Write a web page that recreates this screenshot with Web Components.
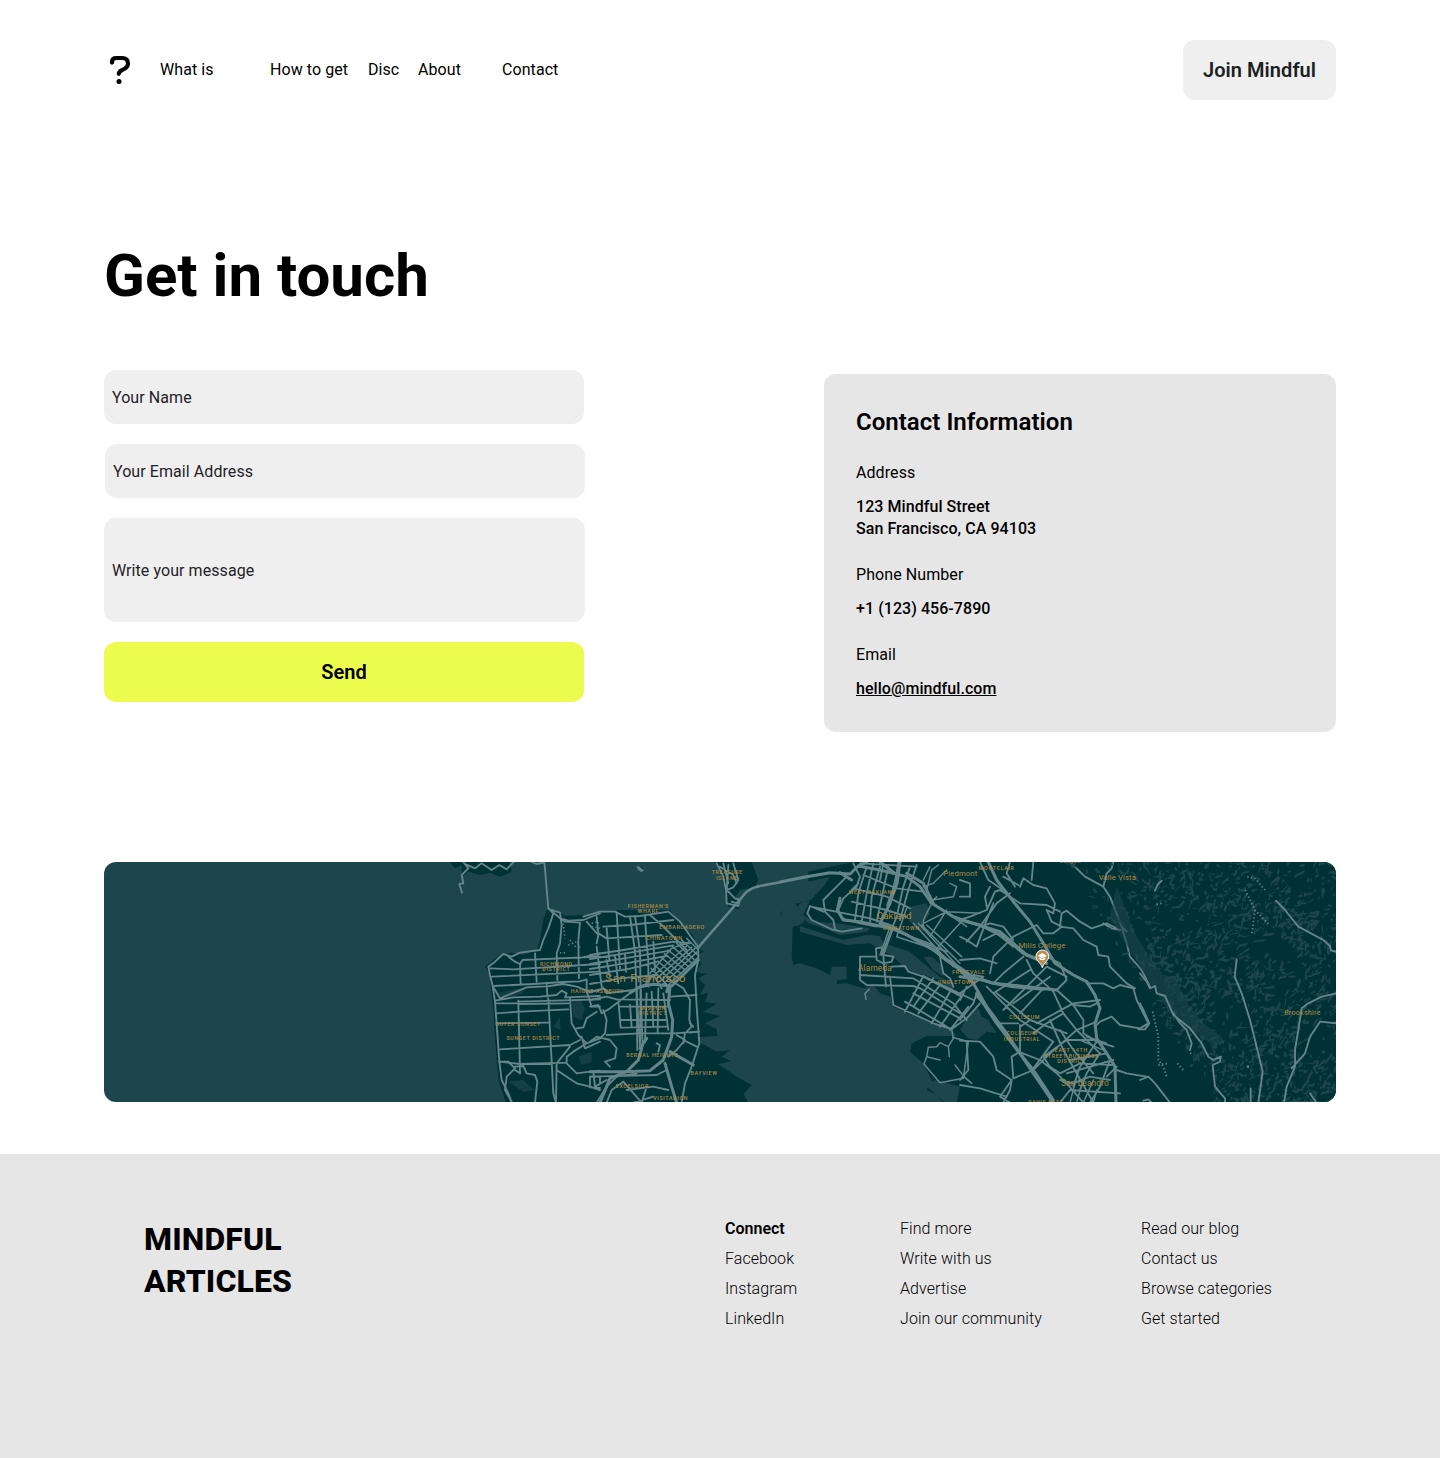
<!DOCTYPE html>
<html lang="en">
<head>
<meta charset="utf-8">
<title>Mindful – Contact</title>
<style>
html,body{margin:0;background:#fff}
body{font-family:Roboto,"Liberation Sans",sans-serif;font-size:16px;line-height:20px;color:#000}
</style>
</head>
<body>
<contact-page></contact-page>

<template id="map-tpl">
<style>
:host{display:block;height:240px;border-radius:12px;overflow:hidden;background:#1c464b}
svg{display:block;width:100%;height:100%}
.land{fill:#003135}
.water{fill:#1c464b}
.r{fill:none;stroke:#64858a;stroke-width:5.6;stroke-linejoin:round;stroke-linecap:round}
.w{stroke-width:9}
.x{stroke-width:12}
.n{stroke-width:4.5}
.dash{stroke-dasharray:4 7;stroke-linecap:butt}
text{font-family:Roboto,sans-serif;fill:#ad8946;font-weight:500;text-anchor:middle;font-size:16px;letter-spacing:1.9px}
.t{font-size:25px;font-weight:400;letter-spacing:.4px}
</style>
<svg viewBox="104 862 1232 240" preserveAspectRatio="none">
<!-- San Francisco peninsula, three units per pixel -->
<g transform="translate(440 860) scale(.33333)">
  <path class="land" d="M320 150L310 180 300 240 290 270 250 285 215 278 185 285 160 300 136 320 150 345 152 380 160 450 164 520 172 620 178 670 200 735H930L910 702 935 675 890 650 835 612 873 603 845 590 870 570 832 575 780 548 770 532 833 528 830 508 795 490 840 468 788 455 830 432 795 425 805 398 780 405 795 375 775 355 800 342 768 335 785 312 775 285 790 273 768 262 760 225 735 205 705 170 690 150 540 150 480 160 430 165 375 168 350 150Z"/>
  <path class="land" d="M30 6L45 25 65 15 65 50 85 35 120 45 150 38 180 50 215 35 210 6ZM825 6L850 60 855 100 865 140 895 148 903 120 885 112 900 90 945 82 955 60 935 6ZM588 18L610 38 608 23Z"/>
  <path class="r" style="fill:#64858a;stroke-width:1" d="M590 18L598 20 612 32 604 36 594 28Z"/>
  <g class="water" opacity=".7"><path d="M395 420L420 415 435 445 425 480 400 470ZM415 590L455 575 455 605 425 615ZM202 665L250 660 282 690 250 695ZM170 400L215 390 260 382 245 402 195 412ZM340 500L360 470 362 510ZM780 290L798 330 785 340Z"/></g>
  <path class="r" d="M313 6L325 145 360 175 385 182 430 180 480 160M70 6L85 25 65 45 70 70 58 72 66 98M80 14L105 25 125 10 155 30 178 15 200 28 220 6M275 6L290 12 312 8M325 145L340 160 325 205 310 240 300 270 240 278 215 290 190 282 165 305 145 320 150 345 158 378 165 425 172 520 178 605 185 660 205 700 215 728"/>
  <path class="r" d="M335 150L360 158 365 195 360 250 350 280 352 360M360 175L375 185 420 188 415 240 417 355M440 185L475 225 470 250M285 280L290 365M240 310L242 370M205 290L225 305 240 312 248 300 480 290M150 325L220 328 480 312M155 350L480 335M158 378L280 372 370 366 420 364 440 358 440 395 480 390M160 382L180 415 260 382 330 378 370 372 410 380 440 392M165 422L220 412 300 410 350 405 365 392 380 400 375 412 480 408M415 295L480 280M320 368L322 410"/>
  <path class="r" d="M235 425L480 418M165 430L235 430M235 432L385 430M168 460L240 455 385 448M170 490L325 488M180 568L390 555 420 540M178 605L240 612 380 608M235 422L240 640M325 415L340 700 348 728M390 415L395 490 415 525 440 550 480 535M440 395L455 440 480 440M440 550L400 575 380 590 380 610 410 640 450 635 480 632M390 560L350 610 348 728M425 530L435 565 480 545M350 630L380 650 410 670 450 680 480 690M450 650H480V670M450 650V682L480 684M410 505L430 502 440 475 470 455"/>
  <path class="r" d="M178 605L205 605 225 625 200 650 195 690 215 725M225 620L250 618 260 640 285 645 292 665 285 728M240 640L225 630"/>
  <path class="r n dash" d="M370 190L375 235M385 255L410 245 420 262M390 240L408 262M455 190L475 185 470 210M360 278L380 278M455 200L480 205"/>
  <g transform="translate(450 0)">
    <path class="r" d="M-20 170L30 155 75 155 105 170 150 168 235 155 270 185 325 262 325 300 315 345 320 440 328 550 305 620 285 670 275 728"/>
    <path class="r" d="M20 170L25 220 50 235 215 225M40 200L120 195 250 180M50 205L58 300M80 160L90 325M120 170L135 275 140 400 150 560M135 168L150 275 152 400 158 560M0 285L100 270 250 245 300 250M0 297L120 278 250 256M0 312L120 292 240 272M0 327L120 308 230 288M0 345L120 326 200 306M0 372L90 355 200 345M180 165L215 195 290 270M165 170L170 250 175 300 175 380M190 245L195 330M20 260L35 380 60 400M50 300L60 350M75 290L85 370M105 280L108 335"/>
    <path class="r n" d="M180 340L245 265 300 245M190 348L290 258M200 356L305 262M210 364L315 265M220 372L322 275M230 380L325 292M183 325L235 378M193 314L248 366M203 303L260 352M213 292L272 340M223 281L283 328M234 270L294 318M247 260L304 308M260 250L312 298M275 240L322 284M290 235L325 270"/>
    <path class="r w" d="M120 398L150 380 190 373 245 378 325 300M235 380L230 395"/><path class="r" style="stroke-width:7.5" d="M325 262L440 130 470 95Q490 81 510 78L570 67"/>
    <path class="r" d="M380 10L400 50 408 90 410 130 445 138 450 120 435 115 410 90 430 82 445 60 430 10M390 20L430 45 440 70M400 10L415 70M415 15L410 90M425 125L440 130"/>
    <path class="r" d="M0 398L40 385 50 400 130 390M0 420L50 410 80 418 240 420M0 440L25 435 35 460 60 445 120 400 160 375M85 420L92 503 230 500M120 435L125 503M140 390L142 570M152 390L150 550M170 400L165 540M185 395L190 500M205 385L203 520M220 400L235 510M95 480L230 480M92 440L235 440M50 525L150 520 250 520 325 515M240 360L280 385 300 420 298 480 305 500 285 520 280 550M240 410L320 405M160 380L190 345 215 385"/>
    <path class="r w" d="M240 380L235 430 248 480 245 530 220 600 180 632 110 635 0 635M225 610L245 680 260 728M155 565L145 600 110 635 60 655 30 728M240 575L310 615M150 565L170 535"/>
    <path class="r" d="M0 545L20 530 60 540 80 565 75 595 45 605 60 620M40 450L50 480 45 520 30 535M0 650L200 645 230 630M10 635L15 680 50 660M20 728L50 680 80 650 140 640M50 728L65 690 100 665M100 665L155 728M110 690L190 680 235 690M130 728L190 710M280 540L320 560M200 550L210 555 205 575M260 525L285 540 260 570 235 590M170 680L155 728M300 490L310 500M328 515L300 518"/>
  </g>
</g>
<!-- East Bay -->
<g transform="translate(780 860) scale(.33333)">
  <path class="land" d="M85 35L150 20 225 6H1680V735H495L470 705 440 690 455 660 430 610 390 575 395 550 440 528 530 528 515 510 465 495 340 440 330 410 300 400 280 375 250 385 200 370 170 372 172 360 200 358 200 320 155 320 150 345 110 325 60 310 40 315 35 290 38 200 60 195 75 180 85 190 120 200 180 225 260 215 270 205 170 190 100 185 70 165 90 120 60 130 40 165 0 170 0 160 50 130 90 122 130 80 150 50 85 65Z"/>
  <path class="water" d="M60 198L190 240 260 225 300 228 310 250 390 275 430 310 480 350 520 370 520 400 480 360 430 345 380 330 340 290 270 250 200 255 60 215ZM390 140L440 130 450 160 430 190 440 210 420 215 385 180ZM430 290L455 290 490 320 490 350 460 330ZM0 165L40 120 70 170 72 190 25 190ZM540 508L575 455 595 445 605 470 625 480 650 520 620 515 590 540 565 535ZM430 670L470 660 540 680 530 728H495Z"/>
  <path class="r" d="M0 66L80 50 150 38 210 42 235 18 260 6" style="stroke-width:9"/>
  <path class="r w" d="M180 38L215 60M235 18L300 30 380 50 420 80 455 130 520 170 580 190 660 215 700 250 740 285 800 310M360 6L345 70 330 130 300 190 380 225 460 270 540 330 580 370 620 440 680 520 720 580 760 640 820 728"/>
  <path class="r x" d="M358 6L350 70 325 135"/><path class="r x" d="M470 275L500 300 540 325 575 350"/><path class="r w" d="M575 350L640 370 700 380 790 388"/>
  <path class="r" d="M220 10L240 50 230 80 190 115 175 150 185 175 240 190 290 200M235 70L215 90M130 120L200 50M130 120L135 155 160 180 165 210 185 215 245 205M130 155L90 138 82 160 95 180 160 210M92 140L270 175 330 195 420 245 500 275M260 20L235 100 225 180M280 10L260 100 245 185M300 20L275 110 270 185M325 20L310 90 290 185M300 10L330 30M220 85L320 110 390 145M215 125L320 150 380 170M250 45L350 85 430 95M390 20L370 80 350 170 330 220 305 285M410 15L385 90 360 180M310 10L300 60M240 10L410 20"/>
  <path class="r w" d="M180 115L172 150 190 180 240 185 330 205M380 40L430 70 460 130M300 6L345 40"/>
  <path class="r n" d="M340 205L310 285M330 200L300 285M400 190L520 320M415 190L530 315M425 195L540 310M440 195L545 290M350 230L470 270M355 215L460 255M380 145L350 230M455 130L430 180 430 200M430 190L500 155 600 160M460 130L560 200M500 150L450 230M540 190L475 260M455 120L520 110 530 80 510 70M430 60L450 20M430 80L460 70 500 30M440 90L455 30 475 15M470 110L450 130"/>
  <path class="r" d="M288 265L305 262 310 285 340 290 335 305 310 310 290 300ZM290 290L240 290 240 360 260 375 400 378 420 385 540 460M310 290L318 380M240 345L400 355 520 430 560 480M335 320L375 318 385 335 430 350 545 410M330 350L340 435 465 492 515 507 560 475 600 430M430 348L375 455M460 355L400 440M480 375L415 460M510 395L455 490M540 415L480 500M565 440L510 510M430 348L580 420M400 400L540 475M375 425L500 500M480 290L490 340 510 355 520 380"/>
  <path class="r n" d="M268 388L255 400 258 418M515 507L520 535 505 560 508 590M505 560L480 548 470 560 445 562 440 590 480 600M440 590L432 612 480 668 550 655 565 545 518 532M525 615L552 650 575 670"/>
  <g transform="translate(540 0)">
    <path class="r w" d="M85 6L110 60 160 125 210 185 250 250 285 310 340 345 380 365 405 405 420 445 405 490 410 535 440 580 465 620 468 728"/>
    <path class="r w" d="M0 180L60 195 130 230 190 280 240 300M50 400L110 490 175 575 220 630 280 720M0 350L70 360 100 370 200 380 290 390"/>
    <path class="r" d="M0 180L30 170 80 150 105 95 120 90 180 130 260 135 300 155M90 80L75 110 80 140M0 110L30 110 30 70 0 60M60 6L85 60 130 90M60 200L20 245 60 200 110 130 150 100M20 240L50 260 80 180 100 130M180 80L190 55 220 75 260 85 285 130 280 160 260 150M220 6L215 60M130 50L175 75M150 6L140 40 165 80M260 150L275 185 305 200 280 220 250 220 230 195 160 230 100 290 90 340M300 200L305 160 320 152 360 185 395 205 440 190 480 210M300 200L340 205 370 240 410 260 415 285 445 290 450 320 500 370 525 385"/>
    <path class="r" d="M330 6L375 50 430 80 450 110 485 200 500 215M430 80L440 40 455 25 460 6M485 200L500 250 510 290 545 330 570 380M480 210L455 205 430 190M380 370L430 370 460 385 480 375 520 385 530 420 550 460 565 490 540 505 480 495 455 470 420 485 405 500M260 320L320 350M240 300L260 290 300 310 320 360 290 390 340 435 390 440 410 430M200 300L220 340 280 395 310 460 350 510 420 580M70 240L110 220 160 260M60 200L90 190 130 200 160 240M0 300L60 295 110 310M20 240L0 230M100 370L130 340 190 290M130 450L230 350 260 320M180 460L250 385M230 490L340 430 420 420M100 400L210 330M160 430L270 350M80 380L180 480 280 545M110 400L210 480 320 520M50 400L40 430 0 480M20 380L0 420M0 400L70 350 40 345"/>
    <path class="r" d="M110 490L80 440 50 410M180 495L180 575 155 590 160 655 220 630 260 590 350 510 410 485M175 575L240 600 290 640 320 670 370 728M175 490L120 490M280 545L220 625M210 480L180 500M310 460L260 490 220 520M340 435L370 480 370 520 410 545 460 560M250 590L320 540 410 540M270 480L310 570 350 640 400 728M300 510L340 570 400 640M0 542L60 545 100 590 110 630 155 660 120 710 150 728M20 545L25 630 0 660M0 675L60 685 140 710M155 660L150 690 130 728M250 590L270 620 300 640 360 610 460 615M300 660L340 670 390 650 450 660M340 680L360 620 410 545M360 690L380 640 420 580M390 728L420 680 450 600M300 728L330 690 480 700M470 620L440 650M470 630L500 640 560 650M330 600L440 580M320 640L460 600"/>
    <path class="r n" d="M350 650L330 728M370 655L350 728M400 660L370 728M410 690L400 728M380 530L440 550M360 540L440 575"/>
  </g>
  <g transform="translate(1080 0)">
    <g id="hills" fill="#1c464b"></g>
    <path class="water" opacity=".6" d="M-70 80L-50 130-20 210 20 280 70 345 110 350 120 390 150 440 190 490 245 530 230 560 180 530 120 490 80 440 50 400 0 320-50 240-90 170Z"/>
    <path class="r" d="M45 92L52 75 65 62M408 122L435 150 475 200 550 240 570 258 573 272 590 275M290 298L284 350 305 400 330 480 350 560 368 635 362 680 355 728M590 400L545 410 505 430 485 445 475 510 465 570 465 620 440 680 432 728M590 490L540 485 510 530 495 580 455 625M0 340L20 365 30 385 45 378 50 400 75 408 100 465 150 505 185 550 205 590 220 600 242 590 240 605 218 615 225 680 255 715 255 728M100 460L120 490 140 510 155 550 150 570M0 430L10 450 28 490 15 508-5 508M0 660L25 650 45 670 90 728M10 722L25 718 35 728M332 685V728M510 700L520 715 530 728H440"/>
    <path class="r dash" d="M322 50L345 55 375 90M315 90L345 150 388 195M345 150L335 225M38 455L55 530 55 600 70 620 80 650M55 615L85 610M112 610L130 630M150 580H160M50 133L65 130"/>
    <circle cx="324" cy="620" r="4" fill="#5f8084"/>
  </g>
</g>
<g transform="translate(440 860) scale(.33333)">
  <text x="349" y="317">RICHMOND</text><text x="349" y="333">DISTRICT</text><text x="472" y="399">HAIGHT-ASHBURY</text><text x="234" y="498">OUTER SUNSET</text><text x="280" y="540">SUNSET DISTRICT</text>
  <text x="625" y="143">FISHERMAN'S</text><text x="625" y="158">WHARF</text><text x="726" y="207">EMBARCADERO</text><text x="673" y="239">CHINATOWN</text><text x="862" y="43">TREASURE</text><text x="862" y="60">ISLAND</text>
  <text x="617" y="365" style="font-size:34px;font-weight:400;letter-spacing:2.3px">San Francisco</text><text x="639" y="449">MISSION</text><text x="639" y="466">DISTRICT</text><text x="637" y="590">BERNAL HEIGHTS</text><text x="792" y="644">BAYVIEW</text><text x="577" y="684">EXCELSIOR</text><text x="692" y="719">VISITACION</text>
</g>
<g transform="translate(780 860) scale(.33333)">
  <text x="277" y="103">WEST OAKLAND</text><text x="343" y="178" class="t" style="font-size:28px">Oakland</text><text x="364" y="209">CHINATOWN</text><text x="285" y="333" class="t">Alameda</text><text x="566" y="343">FRUITVALE</text><text x="528" y="371">JINGLETOWN</text><text x="541" y="48" class="t" style="font-size:23px">Piedmont</text><text x="650" y="29">MONTCLAIR</text><text x="871" y="9">Canyon</text><text x="1012" y="59" class="t" style="font-size:23px">Valle Vista</text><text x="786" y="264" class="t" style="font-size:24px">Mills College</text><text x="734" y="477">COLISEUM</text><text x="726" y="525">COLISEUM</text><text x="726" y="542">INDUSTRIAL</text><text x="874" y="577">EAST 14TH</text><text x="874" y="593">STREET BUSINESS</text><text x="874" y="610">DISTRICT</text><text x="915" y="678" class="t">San Leandro</text><text x="798" y="731">DAVIS EAST</text><text x="1567" y="464" class="t" style="font-size:22px">Brookshire</text>
  <path d="M787 323C782 307 768 303 768 289A19 19 0 0 1 806 289C806 303 792 307 787 323Z" fill="#b98d50" stroke="#fff" stroke-width="3"/>
  <path d="M773 287L787 279 801 287 787 295ZM778 292L787 297 796 292V298Q787 304 778 298Z" fill="#fff"/>
</g>
</svg>
</template>

<script>
const define=(name,html)=>customElements.define(name,class extends HTMLElement{
  constructor(){super();this.attachShadow({mode:'open'}).innerHTML=html}
});

define('brand-mark',`<style>:host{display:block;width:30px;height:30px}svg{display:block}</style>
<svg width="30" height="30" viewBox="0 0 30 30" fill="none"><path d="M8 7.6V6.8Q8 3 12.5 3H18Q24 3 24 8.5Q24 11.5 21 13.5L17.5 15.3Q14.8 16.8 14.8 18.8" stroke="#000" stroke-width="4.2" stroke-linecap="round" stroke-linejoin="round"/><circle cx="15" cy="26.5" r="2.5" fill="#000"/></svg>`);

define('site-header',`<style>
:host{display:flex;align-items:center;justify-content:space-between;height:60px}
.left{display:flex;align-items:center;gap:26px}
nav{display:grid;grid-template-columns:110px 98px 50px 84px auto;font-weight:420;letter-spacing:.07px}
a{color:#000;text-decoration:none;white-space:nowrap}
button{height:60px;width:153px;padding:0;border:0;border-radius:12px;background:#efefef;color:#1b1f23;font:570 20px/24px Roboto,sans-serif;letter-spacing:.05px;white-space:nowrap}
</style><div class="left"><brand-mark></brand-mark><nav><a>What is</a><a>How to get</a><a>Disc</a><a>About</a><a>Contact</a></nav></div><button>Join Mindful</button>`);

define('form-field',`<style>
:host{display:flex;align-items:center;box-sizing:border-box;width:480px;height:54px;padding:2px 8px 0;border-radius:12px;background:#efefef;color:#1f2327;font-weight:420;letter-spacing:.07px}
:host([shifted]){margin-left:1px}
:host([multiline]){width:481px;height:104px}
</style><slot></slot>`);

define('contact-form',`<style>
:host{display:flex;flex-direction:column;gap:20px;width:481px}
button{width:480px;height:60px;border:0;border-radius:12px;background:#ecfc4e;color:#000;font:600 20px/24px Roboto,sans-serif;padding:0}
</style><form-field>Your Name</form-field><form-field shifted>Your Email Address</form-field><form-field multiline>Write your message</form-field><button>Send</button>`);

define('info-item',`<style>
:host{display:flex;flex-direction:column;gap:12px;line-height:22px;font-weight:400;letter-spacing:.08px}
.v{font-weight:540;letter-spacing:.06px}
:host([link]) .v{text-decoration:underline}
</style><div><slot name="label"></slot></div><div class="v"><slot></slot></div>`);

define('contact-card',`<style>
:host{display:flex;flex-direction:column;gap:24px;box-sizing:border-box;width:512px;height:358px;margin-top:4px;padding:34px 32px 0;border-radius:12px;background:#e6e6e6}
h2{margin:0 0 6px;height:24px;font-size:24px;line-height:28px;font-weight:570;letter-spacing:.03px}
</style><h2>Contact Information</h2>
<info-item><span slot="label">Address</span>123 Mindful Street<br>San Francisco, CA 94103</info-item>
<info-item><span slot="label">Phone Number</span>+1 (123) 456-7890</info-item>
<info-item link><span slot="label">Email</span>hello@mindful.com</info-item>`);

customElements.define('area-map',class extends HTMLElement{
  constructor(){
    super();
    const root=this.attachShadow({mode:'open'});
    root.append(document.getElementById('map-tpl').content.cloneNode(true));
    // Seeded relief strokes over the hills east of the bay.
    let s=91;const rnd=()=>(s=(s*16807)%2147483647)/2147483647;
    let d='';
    for(let i=0;i<2500;i++){
      const x=-290+rnd()*890,y=4+rnd()*728;
      if(x<(y-60)*.62-190||(x<0&&rnd()<.55))continue;
      if(Math.sin(x/47+y/90)+Math.cos(y/39-x/110)<-1.1&&rnd()<.75)continue;
      const l=4+rnd()*rnd()*22,w=2+rnd()*5,a=(x<30?.6:-.9)+(rnd()-.5)*2.2;
      const c=Math.cos(a),n=Math.sin(a),f=(u,v)=>(x+c*u-n*v).toFixed(1)+' '+(y+n*u+c*v).toFixed(1);
      d+='M'+f(-l,0)+'L'+[f(-l*.4,-w),f(l*.3,-w*.5),f(l,-w*.2),f(l*.4,w*.9),f(-l*.2,w*.4)].join(' ')+'z';
    }
    const p=document.createElementNS('http://www.w3.org/2000/svg','path');
    p.setAttribute('d',d);root.getElementById('hills').append(p);
  }
});

define('footer-column',`<style>:host{display:flex;flex-direction:column;gap:10px;font-weight:320;letter-spacing:.07px;white-space:nowrap}::slotted(b){font-weight:600;letter-spacing:0}</style><slot></slot>`);

define('site-footer',`<style>
:host{display:flex;box-sizing:border-box;height:304px;padding:64px 144px 0;background:#e6e6e6}
h2{margin:0;width:581px;flex:none;font-size:32px;line-height:42px;font-weight:760;letter-spacing:.12px}
.cols{display:grid;grid-template-columns:175px 241px auto;align-content:start;padding-top:1px}
</style><h2>MINDFUL<br>ARTICLES</h2><div class="cols">
<footer-column><b>Connect</b><span>Facebook</span><span>Instagram</span><span>LinkedIn</span></footer-column>
<footer-column><span>Find more</span><span>Write with us</span><span>Advertise</span><span>Join our community</span></footer-column>
<footer-column><span>Read our blog</span><span>Contact us</span><span>Browse categories</span><span>Get started</span></footer-column></div>`);

define('contact-page',`<style>
:host{display:block}
main{display:block;padding:40px 104px 52px}
h1{margin:140px 0 58px;font-size:60px;line-height:72px;font-weight:680}
.row{display:flex;justify-content:space-between;align-items:flex-start;height:362px;margin-bottom:130px}
</style><main><site-header></site-header><h1>Get in touch</h1><div class="row"><contact-form></contact-form><contact-card></contact-card></div><area-map></area-map></main><site-footer></site-footer>`);
</script>
</body>
</html>
